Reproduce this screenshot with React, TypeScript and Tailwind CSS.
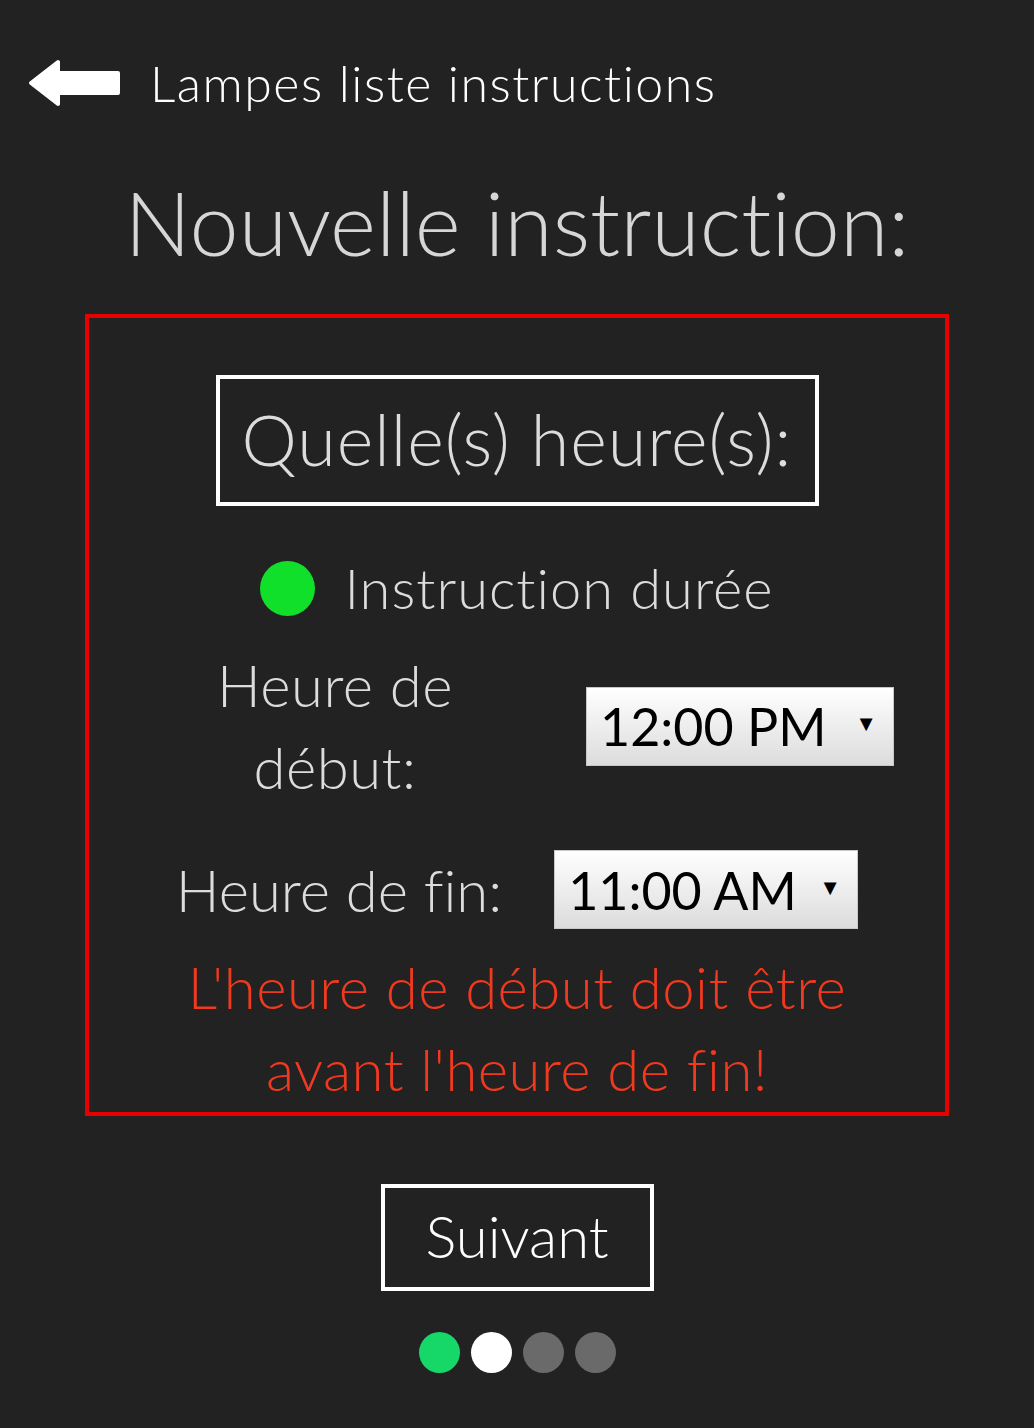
import React from 'react';

const font = { fontFamily: 'Lato, "Open Sans", sans-serif', fontVariantLigatures: 'none' as const };

function BackArrow() {
  return (
    <svg width="94" height="50" viewBox="0 0 94 50" className="shrink-0">
      <path
        d="M3 25 L30 4 L30 15 L90 15 L90 35 L30 35 L30 46 Z"
        fill="#ffffff"
        stroke="#ffffff"
        strokeWidth="4"
        strokeLinejoin="round"
      />
    </svg>
  );
}

function TimeSelect({ value, width }: { value: string; width: string }) {
  return (
    <div
      className={`${width} h-[79px] flex items-center justify-between pl-[13px] pr-[16px] border border-[#c8c8c8] bg-gradient-to-b from-[#ffffff] to-[#dcdcdc] text-black`}
    >
      <span className="text-[52px] font-normal leading-none">{value}</span>
      <span className="text-[22px] leading-none mb-[6px]">▼</span>
    </div>
  );
}

export default function App() {
  const dots = ['bg-[#16d868]', 'bg-white', 'bg-[#6a6a6a]', 'bg-[#6a6a6a]'];

  return (
    <div className="min-h-[1428px] w-full bg-[#222222] font-light" style={font}>
      {/* Header */}
      <div className="flex items-center pl-[28px] pt-[56px] h-[110px]">
        <BackArrow />
        <span className="ml-[28px] text-white text-[50px] leading-none tracking-[1.5px]">
          Lampes liste instructions
        </span>
      </div>

      {/* Title */}
      <h1 className="mt-[62px] text-center text-[#d6d6d6] text-[88px] leading-[100px]">
        Nouvelle instruction:
      </h1>

      {/* Form box */}
      <div className="mx-[85px] mt-[42px] h-[802px] border-4 border-[#e60000] flex flex-col items-center">
        <div className="mt-[57px] w-[603px] h-[131px] border-4 border-white flex items-center justify-center">
          <span className="text-[#dcdcdc] text-[70px] leading-none pb-[4px] tracking-[1px]">Quelle(s) heure(s):</span>
        </div>

        <div className="mt-[50px] h-[64px] flex items-center">
          <span className="w-[55px] h-[55px] rounded-full bg-[#11e02a]" />
          <span className="ml-[29px] text-[#dcdcdc] text-[56px] leading-none tracking-[1px]">
            Instruction durée
          </span>
        </div>

        <div className="w-full flex items-center mt-[24px]">
          <div className="ml-[96px] w-[300px] text-center text-[#dcdcdc] text-[58px] leading-[82px] tracking-[0.5px]">
            Heure de
            <br />
            début:
          </div>
          <div className="ml-[101px]">
            <TimeSelect value="12:00 PM" width="w-[308px]" />
          </div>
        </div>

        <div className="mt-[42px] flex items-center">
          <span className="text-[#dcdcdc] text-[58px] leading-none">Heure de fin:</span>
          <div className="ml-[52px]">
            <TimeSelect value="11:00 AM" width="w-[304px]" />
          </div>
        </div>

        <div className="mt-[17px] text-center text-[#ef3a1f] text-[58px] leading-[82px] tracking-[0.5px]">
          L'heure de début doit être
          <br />
          avant l'heure de fin!
        </div>
      </div>

      {/* Next button */}
      <div className="flex justify-center mt-[68px]">
        <button className="w-[273px] h-[107px] border-4 border-white flex items-center justify-center">
          <span className="text-white text-[58px] leading-none pb-[4px]">Suivant</span>
        </button>
      </div>

      {/* Step dots */}
      <div className="flex justify-center gap-[11px] mt-[41px]">
        {dots.map((c, i) => (
          <span key={i} className={`w-[41px] h-[41px] rounded-full ${c}`} />
        ))}
      </div>
    </div>
  );
}
